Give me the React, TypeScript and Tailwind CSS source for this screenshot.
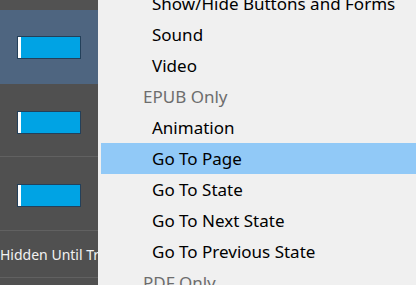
import React from "react";

function Thumb() {
  return (
    <div className="flex h-[23px] w-[64px] border border-[#23405a] bg-[#00a3e4]">
      <div className="w-[3px] bg-white" />
    </div>
  );
}

const items: { label: string; header?: boolean; active?: boolean }[] = [
  { label: "Show/Hide Buttons and Forms" },
  { label: "Sound" },
  { label: "Video" },
  { label: "EPUB Only", header: true },
  { label: "Animation" },
  { label: "Go To Page", active: true },
  { label: "Go To State" },
  { label: "Go To Next State" },
  { label: "Go To Previous State" },
  { label: "PDF Only", header: true },
];

export default function App() {
  return (
    <div
      className="flex h-[285px] w-[416px] overflow-hidden bg-[#f0f0f0]"
      style={{ fontFamily: '"Noto Sans", "Open Sans", sans-serif' }}
    >
      <div className="flex w-[98px] shrink-0 flex-col bg-[#505050]">
        <div className="h-[10px] shrink-0 bg-[#525252]" />
        <div className="flex h-[74px] shrink-0 items-start bg-[#4e6580] pl-[17px] pt-[26px]">
          <Thumb />
        </div>
        <div className="flex h-[73px] shrink-0 items-start border-b border-[#616161] pl-[17px] pt-[27px]">
          <Thumb />
        </div>
        <div className="flex h-[74px] shrink-0 items-start border-b border-[#616161] pl-[17px] pt-[27px]">
          <Thumb />
        </div>
        <div className="flex h-[47px] shrink-0 items-center overflow-hidden whitespace-nowrap border-b border-[#616161] text-[14px] text-[#f2f2f2]">
          Hidden Until Triggered
        </div>
      </div>
      <div className="flex-1 pl-[3px]">
        <div className="-mt-[12px] flex flex-col">
          {items.map((it) => (
            <div
              key={it.label}
              className={`flex h-[31px] items-center whitespace-nowrap text-[17px] ${
                it.active ? "bg-[#91c9f7]" : ""
              } ${it.header ? "pl-[42px] text-[#6d6d6d]" : "pl-[51px] text-[#000000]"}`}
            >
              {it.label}
            </div>
          ))}
        </div>
      </div>
    </div>
  );
}
